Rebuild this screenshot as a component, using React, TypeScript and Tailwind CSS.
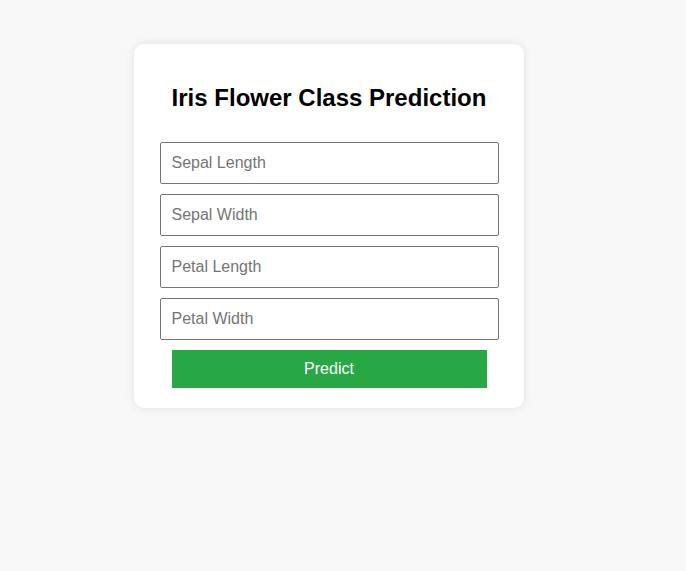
export default function App() {
  const fields = ["Sepal Length", "Sepal Width", "Petal Length", "Petal Width"];

  return (
    <div className="min-h-[571px] bg-[#f8f8f8] pt-[44px] pl-[134px] font-['Liberation_Sans',Arial,sans-serif]">
      <div className="w-[390px] rounded-[10px] bg-white px-[26px] pt-[40px] pb-[20px] shadow-[0_0_10px_rgba(0,0,0,0.1)]">
        <h2 className="text-center text-[24px] font-bold leading-[28px] text-black">
          Iris Flower Class Prediction
        </h2>
        <form className="mt-[30px] flex flex-col items-center gap-[10px]">
          {fields.map((label) => (
            <input
              key={label}
              type="text"
              placeholder={label}
              className="h-[42px] w-[339px] rounded-[2px] border border-[#767676] px-[11px] text-[16px] text-black placeholder:text-[#757575] outline-none"
            />
          ))}
          <button
            type="button"
            className="h-[38px] w-[315px] bg-[#28a745] text-[16px] text-white"
          >
            Predict
          </button>
        </form>
      </div>
    </div>
  );
}
